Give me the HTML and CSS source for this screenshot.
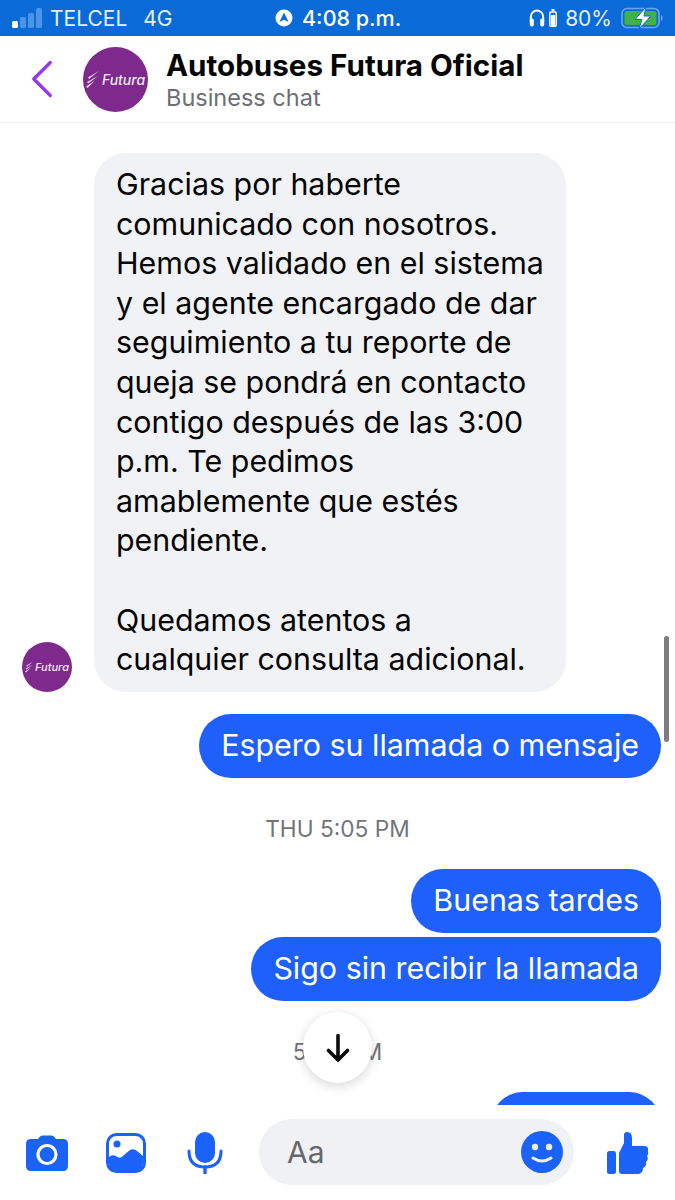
FILE: index.html
```html
<!DOCTYPE html>
<html lang="es">
<head>
    <meta charset="UTF-8">
    <meta name="viewport" content="width=device-width, initial-scale=1.0">
    <title>Autobuses Futura Oficial</title>
    <link rel="stylesheet" href="styles.css">
</head>
<body>
    <div class="phone">
        <!-- Status bar -->
        <div class="status-bar">
            <div class="status-left">
                <div class="signal">
                    <span class="bar bar-1"></span>
                    <span class="bar bar-2"></span>
                    <span class="bar bar-3"></span>
                    <span class="bar bar-4"></span>
                </div>
                <span class="carrier">TELCEL</span>
                <span class="network">4G</span>
            </div>
            <div class="status-center">
                <svg class="location-icon" viewBox="0 0 18 18">
                    <circle cx="9" cy="9" r="8.5" fill="#fff"/>
                    <path d="M9 3.6 L13.6 13 L9 10.8 L4.4 13 Z" fill="#0a6bd8"/>
                </svg>
                <span>4:08 p.m.</span>
            </div>
            <div class="status-right">
                <svg class="headphone-icon" viewBox="0 0 16 18">
                    <path d="M1.8 12 V8 A6.2 6.6 0 0 1 14.2 8 V12" fill="none" stroke="#fff" stroke-width="2"/>
                    <rect x="0.8" y="9.5" width="4" height="8" rx="1.8" fill="#fff"/>
                    <rect x="11.2" y="9.5" width="4" height="8" rx="1.8" fill="#fff"/>
                </svg>
                <svg class="case-icon" viewBox="0 0 8 18">
                    <rect x="2.5" y="0" width="3" height="2" fill="#fff"/>
                    <rect x="0.8" y="3" width="6.4" height="14.2" rx="1.2" fill="none" stroke="#fff" stroke-width="1.5"/>
                    <rect x="2" y="6" width="4" height="11" fill="#fff"/>
                </svg>
                <span class="percent">80%</span>
                <svg class="battery-icon" viewBox="0 0 44 22">
                    <rect x="1" y="1.5" width="37" height="19" rx="5" fill="none" stroke="#6ba8ee" stroke-width="1.6"/>
                    <rect x="3.5" y="4" width="32" height="14" rx="2.5" fill="#3fb24a"/>
                    <path d="M40 8 C42 8.5 42 13.5 40 14 Z" fill="#6ba8ee"/>
                    <path d="M25 0 L14 12.5 H21 L18 22 L30 9 H23 Z" fill="#fff" stroke="#0a6bd8" stroke-width="1"/>
                </svg>
            </div>
        </div>

        <!-- Chat header -->
        <header class="chat-header">
            <svg class="back-icon" viewBox="0 0 24 42">
                <path d="M21 3 L3 21 L21 39" fill="none" stroke="#9437f0" stroke-width="3.6" stroke-linecap="round" stroke-linejoin="round"/>
            </svg>
            <div class="logo logo-big">
                <svg class="logo-wing" viewBox="0 0 14 17">
                    <path d="M13 0 L2 6.5 L3 8 Z M12 5 L1 11 L2 12.5 Z M9 9.5 L0 15.5 L1.5 17 Z" fill="#e9d6ee"/>
                </svg>
                <span>Futura</span>
            </div>
            <div class="chat-title">
                <h1>Autobuses Futura Oficial</h1>
                <p>Business chat</p>
            </div>
        </header>

        <!-- Messages -->
        <main class="chat-body">
            <div class="incoming">
                <div class="logo logo-small">
                    <svg class="logo-wing" viewBox="0 0 14 17">
                        <path d="M13 0 L2 6.5 L3 8 Z M12 5 L1 11 L2 12.5 Z M9 9.5 L0 15.5 L1.5 17 Z" fill="#e9d6ee"/>
                    </svg>
                    <span>Futura</span>
                </div>
                <div class="bubble bubble-in">Gracias por haberte comunicado con nosotros. Hemos validado en el sistema y el agente encargado de dar seguimiento a tu reporte de queja se pondrá en contacto contigo después de las 3:00 p.m. Te pedimos amablemente que estés pendiente.<br><br>Quedamos atentos a cualquier consulta adicional.</div>
            </div>
            <div class="bubble bubble-out bubble-first">Espero su llamada o mensaje</div>
            <div class="time-label time-first">THU 5:05 PM</div>
            <div class="bubble bubble-out bubble-top">Buenas tardes</div>
            <div class="bubble bubble-out bubble-bottom">Sigo sin recibir la llamada</div>
            <div class="time-label time-second">5:25 PM</div>
            <div class="bubble-out bubble-last"></div>

            <div class="scrollbar"></div>
            <div class="scroll-down">
                <svg viewBox="0 0 24 30">
                    <path d="M12 2.5 V27 M2.5 17.5 L12 27 L21.5 17.5" fill="none" stroke="#0a0a0a" stroke-width="3.6" stroke-linecap="round" stroke-linejoin="round"/>
                </svg>
            </div>
        </main>

        <!-- Composer -->
        <footer class="composer">
            <svg class="camera-icon" viewBox="0 0 42 36">
                <path d="M5 4 H12 L14 1.5 Q15 0.5 17 0.5 H25 Q27 0.5 28 1.5 L30 4 H37 Q42 4 42 9 V31 Q42 36 37 36 H5 Q0 36 0 31 V9 Q0 4 5 4 Z" fill="#1b62f8"/>
                <circle cx="21" cy="19.5" r="9" fill="none" stroke="#fff" stroke-width="3.2"/>
            </svg>
            <svg class="photo-icon" viewBox="0 0 40 40">
                <rect x="1.5" y="1.5" width="37" height="37" rx="9" fill="#fff" stroke="#1b62f8" stroke-width="3"/>
                <circle cx="11" cy="11" r="3.5" fill="#1b62f8"/>
                <path d="M3 24 Q6 21 10 23 Q14 27 18 22 L24 17 Q28 15 31 18 L37 23 V30 Q37 38 29 38 H11 Q3 38 3 30 Z" fill="#1b62f8"/>
            </svg>
            <svg class="mic-icon" viewBox="0 0 36 42">
                <rect x="8" y="0" width="20" height="31" rx="10" fill="#1b62f8"/>
                <path d="M2 19 Q2 35 18 35 Q34 35 34 19" fill="none" stroke="#1b62f8" stroke-width="3" stroke-linecap="round"/>
                <path d="M18 35 V41" fill="none" stroke="#1b62f8" stroke-width="3.4" stroke-linecap="round"/>
            </svg>
            <div class="input-box">
                <span>Aa</span>
                <svg class="smile-icon" viewBox="0 0 42 42">
                    <circle cx="21" cy="21" r="21" fill="#1b62f8"/>
                    <circle cx="14" cy="16" r="3.2" fill="#f0f1f5"/>
                    <circle cx="28" cy="16" r="3.2" fill="#f0f1f5"/>
                    <path d="M12 27 Q21 33 30 27" fill="none" stroke="#f0f1f5" stroke-width="3" stroke-linecap="round"/>
                </svg>
            </div>
            <svg class="like-icon" viewBox="0 0 42 42">
                <rect x="0" y="19" width="9" height="23" rx="2.5" fill="#1b62f8"/>
                <path d="M12 21 L17 11 V3 Q17 0 20 0 Q25 0 25 6 V14 H37 Q42 14 41 19 Q42 22 40 24 Q42 27 39 30 Q40 34 36 36 Q36 42 30 42 H15 Q12 42 12 39 Z" fill="#1b62f8"/>
            </svg>
        </footer>
    </div>
</body>
</html>
```

FILE: styles.css
```css
* {
    box-sizing: border-box;
}
body, html {
    margin: 0;
    padding: 0;
    height: 100%;
    background-color: #fff;
    font-family: Inter, "Liberation Sans", sans-serif;
    overflow: hidden;
}
.phone {
    display: flex;
    flex-direction: column;
    height: 1200px;
}

/* Status bar */
.status-bar {
    position: relative;
    display: flex;
    align-items: center;
    justify-content: space-between;
    height: 36px;
    flex-shrink: 0;
    padding: 0 10px 0 12px;
    background-color: #0a6bd8;
    color: #e6f0fc;
    font-size: 21px;
}
.status-left,
.status-center,
.status-right {
    display: flex;
    align-items: center;
}
.signal {
    display: flex;
    align-items: flex-end;
    gap: 2px;
    height: 20px;
    margin-right: 8px;
}
.bar {
    width: 6px;
    border-radius: 1.5px;
    background-color: #4b94e8;
}
.bar-1 {
    height: 7px;
    background-color: #fff;
}
.bar-2 {
    height: 11px;
}
.bar-3 {
    height: 15px;
}
.bar-4 {
    height: 20px;
}
.carrier {
    margin-right: 16px;
}
.status-center {
    position: absolute;
    left: 275px;
    top: 5px;
    gap: 9px;
    font-size: 21.5px;
    font-weight: 500;
    color: #fff;
}
.location-icon {
    width: 18px;
    height: 18px;
}
.status-right {
    gap: 4px;
}
.headphone-icon {
    width: 16px;
    height: 18px;
}
.case-icon {
    width: 8px;
    height: 18px;
    margin-right: 4px;
}
.percent {
    margin-right: 5px;
}
.battery-icon {
    width: 44px;
    height: 22px;
}

/* Header */
.chat-header {
    display: flex;
    align-items: center;
    height: 87px;
    flex-shrink: 0;
    padding: 0 0 0 31px;
    border-bottom: 1px solid #eceded;
}
.back-icon {
    width: 22px;
    height: 42px;
    margin-right: 30px;
}
.logo {
    display: flex;
    align-items: center;
    justify-content: center;
    flex-shrink: 0;
    border-radius: 50%;
    background-color: #7e2a8c;
    color: #f3e6f5;
    font-weight: 500;
    font-style: italic;
}
.logo-big {
    width: 65px;
    height: 65px;
    gap: 2px;
    margin-right: 18px;
    font-size: 14px;
}
.logo-big .logo-wing {
    width: 14px;
    height: 17px;
}
.logo-small {
    width: 50px;
    height: 50px;
    gap: 1px;
    margin-right: 22px;
    font-size: 11px;
}
.logo-small .logo-wing {
    width: 9px;
    height: 12px;
}
.chat-title h1 {
    margin: 0;
    font-size: 29.6px;
    font-weight: 700;
    line-height: 34px;
    color: #050505;
}
.chat-title p {
    margin: 3px 0 0;
    font-size: 23.5px;
    line-height: 26px;
    color: #6c6e72;
}

/* Messages */
.chat-body {
    position: relative;
    display: flex;
    flex-direction: column;
    align-items: flex-end;
    flex: 1;
    min-height: 0;
    padding: 30px 14px 0 22px;
    overflow: hidden;
}
.incoming {
    display: flex;
    align-items: flex-end;
    align-self: flex-start;
}
.bubble {
    font-size: 30.4px;
    line-height: 39.6px;
    color: #050505;
}
.bubble-in {
    width: 472px;
    padding: 12px 20px 12px 22px;
    border-radius: 32px;
    background-color: #f1f2f6;
}
.bubble-out {
    flex-shrink: 0;
    padding: 12px 22px 12px;
    border-radius: 32px;
    background-color: #1f60fb;
    color: #fff;
}
.bubble-first {
    margin-top: 22px;
    padding-bottom: 13px;
}
.bubble-top {
    border-bottom-right-radius: 8px;
}
.bubble-bottom {
    margin-top: 4px;
    border-top-right-radius: 8px;
}
.bubble-last {
    width: 170px;
    height: 64px;
    margin-top: 27px;
}
.time-label {
    align-self: center;
    margin-right: 8px;
    font-size: 22.7px;
    line-height: 26px;
    color: #727479;
}
.time-first {
    margin-top: 38px;
    margin-bottom: 27px;
}
.time-second {
    margin-top: 38px;
}
.scrollbar {
    position: absolute;
    top: 513px;
    right: 6px;
    width: 5px;
    height: 106px;
    border-radius: 3px;
    background-color: #7d7d7d;
}
.scroll-down {
    position: absolute;
    top: 889px;
    left: 303px;
    display: flex;
    align-items: center;
    justify-content: center;
    width: 69px;
    height: 71px;
    border-radius: 50%;
    background-color: #fff;
    box-shadow: 0 3px 12px rgba(0, 0, 0, 0.16);
}
.scroll-down svg {
    width: 24px;
    height: 30px;
}

/* Composer */
.composer {
    display: flex;
    align-items: center;
    height: 95px;
    flex-shrink: 0;
    padding: 0 0 0 26px;
}
.camera-icon {
    width: 42px;
    height: 36px;
    margin-right: 38px;
}
.photo-icon {
    width: 40px;
    height: 40px;
    margin-right: 41px;
}
.mic-icon {
    width: 36px;
    height: 42px;
    margin-right: 36px;
}
.input-box {
    display: flex;
    align-items: center;
    justify-content: space-between;
    width: 315px;
    height: 66px;
    padding: 0 11px 0 28px;
    margin-right: 33px;
    margin-bottom: 1px;
    border-radius: 33px;
    background-color: #f0f1f5;
    font-size: 30px;
    color: #65676b;
}
.smile-icon {
    width: 42px;
    height: 42px;
}
.like-icon {
    width: 42px;
    height: 42px;
}
```
